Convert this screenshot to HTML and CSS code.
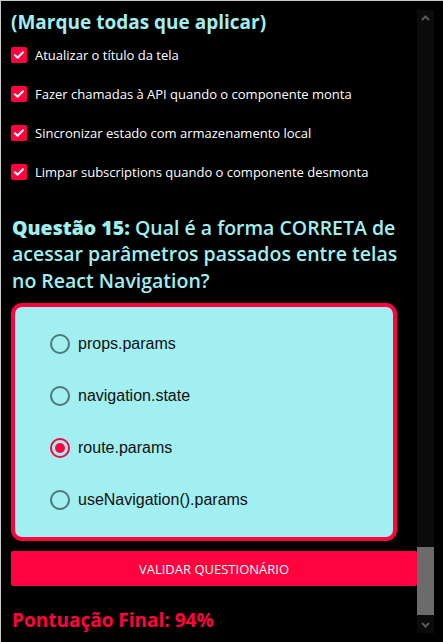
FILE: index.html
```html
<!DOCTYPE html>
<html lang="pt">
<head>
<meta charset="utf-8">
<link rel="stylesheet" href="styles.css">
</head>
<body>
<div class="frame">
  <main class="content">
    <h2 class="title">(Marque todas que aplicar)</h2>
    <ul class="checks">
      <li class="check"><span class="box"><svg viewBox="0 0 16 16" width="16" height="16"><path d="M4 8.3l2.6 2.5L12 5.3" fill="none" stroke="#fff" stroke-width="2" stroke-linecap="round" stroke-linejoin="round"/></svg></span>Atualizar o título da tela</li>
      <li class="check"><span class="box"><svg viewBox="0 0 16 16" width="16" height="16"><path d="M4 8.3l2.6 2.5L12 5.3" fill="none" stroke="#fff" stroke-width="2" stroke-linecap="round" stroke-linejoin="round"/></svg></span>Fazer chamadas à API quando o componente monta</li>
      <li class="check"><span class="box"><svg viewBox="0 0 16 16" width="16" height="16"><path d="M4 8.3l2.6 2.5L12 5.3" fill="none" stroke="#fff" stroke-width="2" stroke-linecap="round" stroke-linejoin="round"/></svg></span>Sincronizar estado com armazenamento local</li>
      <li class="check"><span class="box"><svg viewBox="0 0 16 16" width="16" height="16"><path d="M4 8.3l2.6 2.5L12 5.3" fill="none" stroke="#fff" stroke-width="2" stroke-linecap="round" stroke-linejoin="round"/></svg></span>Limpar subscriptions quando o componente desmonta</li>
    </ul>
    <h2 class="question"><span class="qnum">Questão 15:</span> Qual é a forma CORRETA de acessar parâmetros passados entre telas no React Navigation?</h2>
    <div class="card">
      <div class="option"><span class="radio"></span>props.params</div>
      <div class="option"><span class="radio"></span>navigation.state</div>
      <div class="option"><span class="radio selected"></span>route.params</div>
      <div class="option"><span class="radio"></span>useNavigation().params</div>
    </div>
    <button class="validate">VALIDAR QUESTIONÁRIO</button>
    <p class="score">Pontuação Final: 94%</p>
  </main>
  <div class="scrollbar">
    <div class="arrow up"><svg viewBox="0 0 17 17" width="17" height="17"><path d="M5 10l3.5-3.5L12 10" fill="none" stroke="#5a5a5a" stroke-width="2"/></svg></div>
    <div class="track"><div class="thumb"></div></div>
    <div class="arrow down"><svg viewBox="0 0 17 17" width="17" height="17"><path d="M5 7l3.5 3.5L12 7" fill="none" stroke="#5a5a5a" stroke-width="2"/></svg></div>
  </div>
  <div class="gutter"></div>
</div>
</body>
</html>
```
FILE: styles.css
```css
html, body {
  margin: 0;
  padding: 0;
  background: #000;
  height: 100%;
}
body {
  box-sizing: border-box;
  border-top: 1px solid #c8c8c8;
  border-left: 1px solid #c8c8c8;
  overflow: hidden;
}
.frame {
  display: flex;
  height: 641px;
}
.content {
  flex: 1;
  padding: 0 0 0 10px;
  min-width: 0;
}
.title {
  margin: 6.5px 0 0 0;
  font-family: "Open Sans", sans-serif;
  font-weight: 700;
  font-size: 19px;
  line-height: 28px;
  color: #a0eeee;
}
.checks {
  list-style: none;
  margin: 0;
  padding: 0;
}
.check {
  display: flex;
  align-items: center;
  height: 39px;
  font-family: "Open Sans", sans-serif;
  font-size: 13px;
  color: #fff;
}
.box {
  width: 16px;
  height: 16px;
  border-radius: 2px;
  background: #ff033e;
  margin-right: 8px;
  display: flex;
}
.question {
  margin: 23px 8px 0 1px;
  font-family: "Open Sans", sans-serif;
  font-weight: 600;
  font-size: 19.5px;
  line-height: 26.5px;
  color: #a0eeee;
}
.qnum {
  font-weight: 800;
}
.card {
  margin: 9px 20px 0 0;
  border: 4px solid #ff033e;
  border-radius: 11px;
  background: #a1eff0;
  padding: 11px 0 11px 35px;
}
.option {
  display: flex;
  align-items: center;
  height: 52px;
  font-family: "Liberation Sans", Arial, sans-serif;
  font-size: 16px;
  color: #111;
}
.radio {
  box-sizing: border-box;
  width: 20px;
  height: 20px;
  border: 2px solid #4d7777;
  border-radius: 50%;
  margin-right: 8px;
  display: flex;
  align-items: center;
  justify-content: center;
}
.radio.selected {
  border-color: #ff033e;
}
.radio.selected::after {
  content: "";
  width: 10px;
  height: 10px;
  border-radius: 50%;
  background: #ff033e;
}
.validate {
  display: block;
  width: 100%;
  margin: 10px 0 0 0;
  height: 35px;
  border: none;
  border-radius: 2px;
  background: #ff033e;
  color: #fff;
  font-family: "Open Sans", sans-serif;
  font-size: 13px;
  padding: 0;
}
.score {
  margin: 21px 0 0 1px;
  font-family: "Open Sans", sans-serif;
  font-weight: 700;
  font-size: 19px;
  line-height: 26px;
  color: #ff033e;
}
.scrollbar {
  width: 17px;
  margin: 9px 0 9px 0;
  display: flex;
  flex-direction: column;
  background: #0b0b0b;
}
.arrow {
  height: 17px;
  display: flex;
}
.track {
  flex: 1;
  display: flex;
  flex-direction: column;
  justify-content: flex-end;
  padding-bottom: 1px;
}
.thumb {
  height: 68px;
  background: #6b6b6b;
}
.gutter {
  width: 9px;
}
```
